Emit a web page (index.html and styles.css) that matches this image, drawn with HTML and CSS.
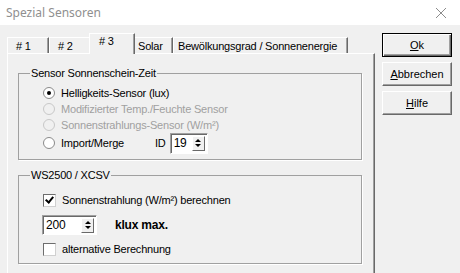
FILE: index.html
```html
<!DOCTYPE html>
<html lang="de">

<head>
    <meta charset="UTF-8">
    <title>Spezial Sensoren</title>
    <link rel="stylesheet" href="styles.css">
</head>

<body>
    <header class="titlebar">
        <span class="title">Spezial Sensoren</span>
        <svg class="close" width="12" height="12" viewBox="0 0 12 12">
            <path d="M1 1 L11 11 M11 1 L1 11" stroke="#8c8c8c" stroke-width="1" fill="none"/>
        </svg>
    </header>

    <main class="window">
        <section class="tabctl">
            <ul class="tabs">
                <li class="tab t1"># 1</li>
                <li class="tab t2"># 2</li>
                <li class="tab t3 active"># 3</li>
                <li class="tab t4">Solar</li>
                <li class="tab t5">Bewölkungsgrad / Sonnenenergie</li>
            </ul>
            <div class="panel">
                <fieldset class="group g1">
                    <legend>Sensor Sonnenschein-Zeit</legend>
                    <div class="inner">
                        <div class="row"><span class="radio checked"></span>Helligkeits-Sensor (lux)</div>
                        <div class="row disabled"><span class="radio"></span>Modifizierter Temp./Feuchte Sensor</div>
                        <div class="row disabled"><span class="radio"></span>Sonnenstrahlungs-Sensor (W/m²)</div>
                        <div class="row merge">
                            <span class="radio"></span>Import/Merge
                            <span class="idlabel">ID</span>
                            <span class="spin small"><span class="val">19</span><span class="arrows"><i class="up"></i><i class="down"></i></span></span>
                        </div>
                    </div>
                </fieldset>

                <fieldset class="group g2">
                    <legend>WS2500 / XCSV</legend>
                    <div class="inner">
                        <div class="row"><span class="check on"></span>Sonnenstrahlung (W/m²) berechnen</div>
                        <div class="row klux">
                            <span class="spin wide"><span class="val">200</span><span class="arrows"><i class="up"></i><i class="down"></i></span></span>
                            <b>klux max.</b>
                        </div>
                        <div class="row"><span class="check"></span>alternative Berechnung</div>
                    </div>
                </fieldset>
            </div>
        </section>

        <nav class="buttons">
            <button class="btn default"><u>O</u>k</button>
            <button class="btn"><u>A</u>bbrechen</button>
            <button class="btn"><u>H</u>ilfe</button>
        </nav>
    </main>
</body>

</html>
```

FILE: styles.css
```css
body {
    margin: 0;
    padding: 0;
    background-color: #f0f0f0;
    font-family: "Liberation Sans", Arial, sans-serif;
    font-size: 11px;
    letter-spacing: -0.2px;
    color: #000;
    overflow: hidden;
}

.titlebar {
    height: 25px;
    background-color: #fff;
    display: flex;
    align-items: center;
    justify-content: space-between;
    padding: 0 13px 0 6px;
}

.title {
    font-family: "Noto Sans", sans-serif;
    font-size: 12px;
    letter-spacing: 0;
    color: #8f8f8f;
}

.window {
    display: flex;
    align-items: flex-start;
    padding: 8px 0 0 7px;
}

.tabctl {
    width: 368px;
}

.tabs {
    list-style-type: none;
    margin: 0;
    padding: 0;
    height: 20px;
    display: flex;
    align-items: flex-end;
}

.tab {
    height: 16px;
    box-sizing: border-box;
    border-top: 1px solid #fff;
    border-left: 1px solid #fff;
    border-right: 1px solid #696969;
    box-shadow: inset -1px 0 0 #a0a0a0;
    padding: 2px 0 0 6px;
    white-space: nowrap;
}

.t1 { width: 42px; padding-left: 8px; }
.t2 { width: 42px; padding-left: 8px; }
.t4 { width: 40px; padding-left: 4px; }
.t5 { width: 175px; padding-left: 4px; }

.tab.active {
    width: 46px;
    height: 21px;
    margin: 0 -2px -1px -2px;
    padding: 1px 0 0 9px;
    background-color: #f0f0f0;
    position: relative;
    z-index: 1;
}

.panel {
    height: 240px;
    box-sizing: border-box;
    border-top: 1px solid #fff;
    border-left: 1px solid #fff;
    border-right: 1px solid #696969;
    box-shadow: inset -1px 0 0 #a0a0a0;
    padding: 13px 12px 0 10px;
}

.group {
    margin: 0;
    border: 1px solid #a0a0a0;
    box-shadow: 1px 1px 0 #fff;
    padding: 0 0 0 6px;
    box-sizing: border-box;
}

.group legend {
    padding: 0 1px;
    margin-left: 5px;
}

.inner {
    padding-left: 18px;
}

.g1 {
    height: 93px;
}

.g1 .inner {
    padding-top: 6px;
}

.g2 {
    margin-top: 9px;
    height: 95px;
}

.g2 .inner {
    padding-top: 11px;
}

.row {
    display: flex;
    align-items: center;
    height: 16px;
}

.row.disabled {
    color: #a0a0a0;
}

.radio {
    width: 10px;
    height: 10px;
    border: 1px solid #8a8a8a;
    border-radius: 50%;
    background-color: #fff;
    margin-right: 6px;
    display: flex;
    align-items: center;
    justify-content: center;
}

.radio.checked::after {
    content: "";
    width: 4px;
    height: 4px;
    border-radius: 50%;
    background-color: #000;
}

.disabled .radio {
    border-color: #c8c8c8;
    background-color: #f0f0f0;
}

.merge {
    height: 22px;
    margin-top: -1px;
}

.idlabel {
    margin-left: 31px;
    margin-right: 4px;
}

.spin {
    display: flex;
    box-sizing: border-box;
    height: 21px;
    border-top: 1px solid #a0a0a0;
    border-left: 1px solid #a0a0a0;
    border-right: 1px solid #fff;
    border-bottom: 1px solid #fff;
    box-shadow: inset 1px 1px 0 #696969;
    background-color: #fff;
    padding: 2px 2px 2px 3px;
    align-items: center;
    justify-content: space-between;
}

.spin.small {
    width: 38px;
}

.spin.wide {
    width: 55px;
    height: 20px;
}

.spin .val {
    font-size: 12px;
}

.arrows {
    width: 13px;
    height: 15px;
    display: flex;
    flex-direction: column;
    border-top: 1px solid #fff;
    border-left: 1px solid #fff;
    border-right: 1px solid #696969;
    border-bottom: 1px solid #696969;
    background-color: #f0f0f0;
    box-sizing: border-box;
    align-items: center;
    justify-content: center;
    gap: 2px;
}

.arrows i {
    width: 0;
    height: 0;
    border-left: 3px solid transparent;
    border-right: 3px solid transparent;
}

.arrows .up {
    border-bottom: 3px solid #000;
}

.arrows .down {
    border-top: 3px solid #000;
}

.check {
    width: 11px;
    height: 11px;
    border-top: 1px solid #6d6d6d;
    border-left: 1px solid #6d6d6d;
    border-right: 1px solid #d0d0d0;
    border-bottom: 1px solid #d0d0d0;
    background-color: #fff;
    margin-right: 6px;
    position: relative;
}

.check.on::after {
    content: "";
    position: absolute;
    left: 3px;
    top: 0px;
    width: 3px;
    height: 6px;
    border-right: 2px solid #000;
    border-bottom: 2px solid #000;
    transform: rotate(40deg);
}

.klux {
    height: 20px;
    margin: 7px 0 6px -1px;
}

.klux b {
    margin-left: 18px;
    font-size: 12px;
}

.buttons {
    display: flex;
    flex-direction: column;
    gap: 5px;
    margin-left: 7px;
}

.btn {
    width: 70px;
    height: 24px;
    box-sizing: border-box;
    background-color: #f0f0f0;
    font-family: "Liberation Sans", Arial, sans-serif;
    font-size: 11px;
    color: #000;
    border-top: 1px solid #fff;
    border-left: 1px solid #fff;
    border-right: 1px solid #696969;
    border-bottom: 1px solid #696969;
    box-shadow: inset -1px -1px 0 #a0a0a0;
    padding: 0;
}

.btn.default {
    border: 1px solid #000;
    box-shadow: inset 1px 1px 0 #fff, inset -1px -1px 0 #696969, inset -2px -2px 0 #a0a0a0;
}
```
